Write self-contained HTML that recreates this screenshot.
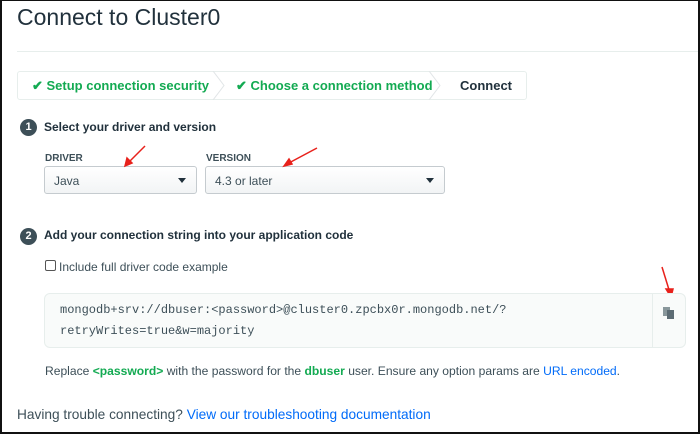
<!DOCTYPE html>
<html><head><style>
*{margin:0;padding:0;box-sizing:border-box}
body{width:700px;height:434px;background:#fff;font-family:"Liberation Sans",sans-serif;position:relative;overflow:hidden;color:#21313c}
.frame{position:absolute;left:0;top:0;width:700px;height:434px;border:2px solid #111;border-top:1px solid #111}
.a{position:absolute;white-space:nowrap}
.g{color:#13aa52;font-weight:bold}
.lnk{color:#016bf8}
.circ{position:absolute;width:17px;height:17px;border-radius:50%;background:#3d4f58;color:#fff;font-weight:bold;font-size:11px;text-align:center;line-height:17px}
.sel{position:absolute;height:28px;border:1px solid #c5cbcf;border-radius:3px;background:linear-gradient(#fff,#f2f4f5);font-size:12px;line-height:28px;padding-left:9px;color:#3d4f58}
.sel:after{content:"";position:absolute;right:10px;top:11px;border-left:4px solid transparent;border-right:4px solid transparent;border-top:5px solid #21313c}
.lbl{font-size:10px;color:#3d4f58;font-weight:bold}
.mono{font-family:"Liberation Mono",monospace;font-size:12px;color:#3d4f58}
</style></head><body>
<div class="a" style="left:17px;top:4px;font-size:23px;color:#21313c">Connect to Cluster0</div>
<div class="a" style="left:17px;top:51px;width:683px;height:1px;background:#e7eeec"></div>
<div class="a" style="left:17px;top:71px;width:510px;height:29px;border:1px solid #e7eeec;border-radius:3px"></div>
<svg class="a" style="left:212px;top:71px" width="14" height="29"><path d="M1 0 L12 14.5 L1 29" fill="none" stroke="#e1e5e7"/></svg>
<svg class="a" style="left:428px;top:71px" width="14" height="29"><path d="M1 0 L12 14.5 L1 29" fill="none" stroke="#e1e5e7"/></svg>
<div class="a g" style="left:32px;top:78px;font-size:13px">✔ Setup connection security</div>
<div class="a g" style="left:236px;top:78px;font-size:13px">✔ Choose a connection method</div>
<div class="a" style="left:460px;top:78px;font-size:13px;font-weight:bold;color:#21313c">Connect</div>
<div class="circ" style="left:20px;top:119px">1</div>
<div class="a" style="left:44px;top:120px;font-size:12px;font-weight:bold">Select your driver and version</div>
<div class="a lbl" style="left:45px;top:153px">DRIVER</div>
<div class="a lbl" style="left:206px;top:153px">VERSION</div>
<div class="sel" style="left:44px;top:166px;width:153px">Java</div>
<div class="sel" style="left:205px;top:166px;width:240px">4.3 or later</div>
<svg class="a" style="left:0;top:0" width="700" height="434">
<g stroke="#e8211b" stroke-width="1.5" fill="#e8211b">
<line x1="145" y1="146" x2="128" y2="163"/><path d="M125 166 L127 158 L132 163Z"/>
<line x1="317" y1="148" x2="287" y2="164"/><path d="M284 166 L289 159 L292 164Z"/>
<line x1="662" y1="267" x2="670" y2="293"/><path d="M671 297 L666 289 L673 289Z"/>
</g></svg>
<div class="circ" style="left:20px;top:228px">2</div>
<div class="a" style="left:44px;top:228px;font-size:12px;font-weight:bold">Add your connection string into your application code</div>
<div class="a" style="left:45px;top:260px;width:11px;height:11px;border:1px solid #555;border-radius:2px"></div>
<div class="a" style="left:59px;top:260px;font-size:12px;color:#3d4f58">Include full driver code example</div>
<div class="a" style="left:44px;top:293px;width:642px;height:55px;border:1px solid #e7eeec;border-radius:6px;background:#f9fbfa"></div>
<div class="a" style="left:652px;top:294px;width:1px;height:53px;background:#e7eeec"></div>
<div class="a mono" style="left:60px;top:303px">mongodb+srv://dbuser:&lt;password&gt;@cluster0.zpcbx0r.mongodb.net/?</div>
<div class="a mono" style="left:60px;top:324px">retryWrites=true&amp;w=majority</div>
<svg class="a" style="left:661px;top:304px" width="16" height="16"><rect x="2" y="3" width="7" height="9" fill="#89979b"/><rect x="6" y="6" width="7" height="9" fill="#5d6c74"/></svg>
<div class="a" style="left:45px;top:364px;font-size:12.1px;color:#3d4f58">Replace <span class="g">&lt;password&gt;</span> with the password for the <span class="g">dbuser</span> user. Ensure any option params are <span class="lnk">URL encoded</span>.</div>
<div class="a" style="left:17px;top:407px;font-size:13.7px;color:#3d4f58">Having trouble connecting? <span class="lnk">View our troubleshooting documentation</span></div>
<div class="frame"></div>
</body></html>
